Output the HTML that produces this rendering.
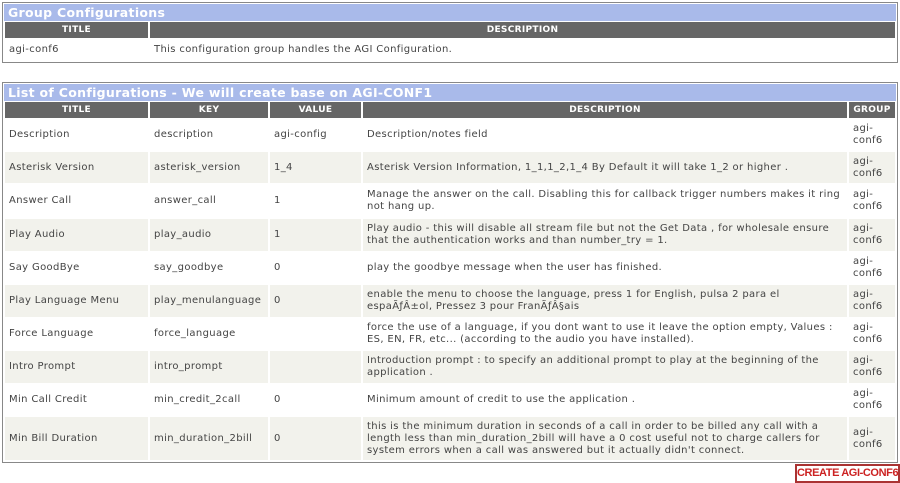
<!DOCTYPE html>
<html><head><style>
body{margin:0;background:#fff;font-family:"DejaVu Sans",Verdana,sans-serif;font-size:10px;letter-spacing:0.35px;color:#444;width:900px;height:482px;overflow:hidden;position:relative}
.box{position:absolute;left:2px;width:894px;border:1px solid #888;background:#fff}
.tt{background:#a9baea;color:#fff;font-weight:bold;font-size:12.5px;letter-spacing:0.3px;height:17px;line-height:17px;padding-left:4px;margin:1px}
table{border-collapse:separate;border-spacing:2px 0;table-layout:fixed;width:100%;margin-top:0}
th{background:#666;color:#fff;font-size:9px;font-weight:bold;height:16px;padding:0;text-align:center;letter-spacing:0.3px}
td{padding:0 4px;vertical-align:middle;line-height:12px;border-top:1px solid #fff}
tr.a td{background:#fff}
tr.b td{background:#f2f2ec}
.btn{position:absolute;left:795px;top:464px;width:101px;height:15px;border:2px solid #a33;color:#c22;font-family:"Liberation Sans",Arial,sans-serif;font-weight:bold;font-size:11px;letter-spacing:-0.4px;white-space:nowrap;line-height:15px;text-align:center;background:#fff;overflow:hidden}
</style></head><body>
<div class="box" style="top:2px;height:59px">
<div class="tt">Group Configurations</div>
<table><colgroup><col style="width:143px"><col></colgroup>
<tr><th>TITLE</th><th>DESCRIPTION</th></tr>
<tr class="a"><td style="height:21px">agi-conf6</td><td>This configuration group handles the AGI Configuration.</td></tr>
</table></div>

<div class="box" style="top:82px;height:379px">
<div class="tt">List of Configurations - We will create base on AGI-CONF1</div>
<table><colgroup><col style="width:143px"><col style="width:118px"><col style="width:91px"><col><col style="width:46px"></colgroup>
<tr><th>TITLE</th><th>KEY</th><th>VALUE</th><th>DESCRIPTION</th><th>GROUP</th></tr>
<tr class="a"><td style="height:32px">Description</td><td>description</td><td>agi-config</td><td>Description/notes field</td><td>agi-<br>conf6</td></tr>
<tr class="b"><td style="height:31px">Asterisk Version</td><td>asterisk_version</td><td>1_4</td><td>Asterisk Version Information, 1_1,1_2,1_4 By Default it will take 1_2 or higher .</td><td>agi-<br>conf6</td></tr>
<tr class="a"><td style="height:34px">Answer Call</td><td>answer_call</td><td>1</td><td>Manage the answer on the call. Disabling this for callback trigger numbers makes it ring not hang up.</td><td>agi-<br>conf6</td></tr>
<tr class="b"><td style="height:32px">Play Audio</td><td>play_audio</td><td>1</td><td>Play audio - this will disable all stream file but not the Get Data , for wholesale ensure that the authentication works and than number_try = 1.</td><td>agi-<br>conf6</td></tr>
<tr class="a"><td style="height:32px">Say GoodBye</td><td>say_goodbye</td><td>0</td><td>play the goodbye message when the user has finished.</td><td>agi-<br>conf6</td></tr>
<tr class="b"><td style="height:32px">Play Language Menu</td><td>play_menulanguage</td><td>0</td><td>enable the menu to choose the language, press 1 for English, pulsa 2 para el espaÃƒÂ±ol, Pressez 3 pour FranÃƒÂ§ais</td><td>agi-<br>conf6</td></tr>
<tr class="a"><td style="height:32px">Force Language</td><td>force_language</td><td></td><td>force the use of a language, if you dont want to use it leave the option empty, Values : ES, EN, FR, etc... (according to the audio you have installed).</td><td>agi-<br>conf6</td></tr>
<tr class="b"><td style="height:32px">Intro Prompt</td><td>intro_prompt</td><td></td><td>Introduction prompt : to specify an additional prompt to play at the beginning of the application .</td><td>agi-<br>conf6</td></tr>
<tr class="a"><td style="height:32px">Min Call Credit</td><td>min_credit_2call</td><td>0</td><td>Minimum amount of credit to use the application .</td><td>agi-<br>conf6</td></tr>
<tr class="b"><td style="height:43px">Min Bill Duration</td><td>min_duration_2bill</td><td>0</td><td>this is the minimum duration in seconds of a call in order to be billed any call with a length less than min_duration_2bill will have a 0 cost useful not to charge callers for system errors when a call was answered but it actually didn't connect.</td><td>agi-<br>conf6</td></tr>
</table></div>
<div class="btn">CREATE AGI-CONF6</div>
</body></html>
